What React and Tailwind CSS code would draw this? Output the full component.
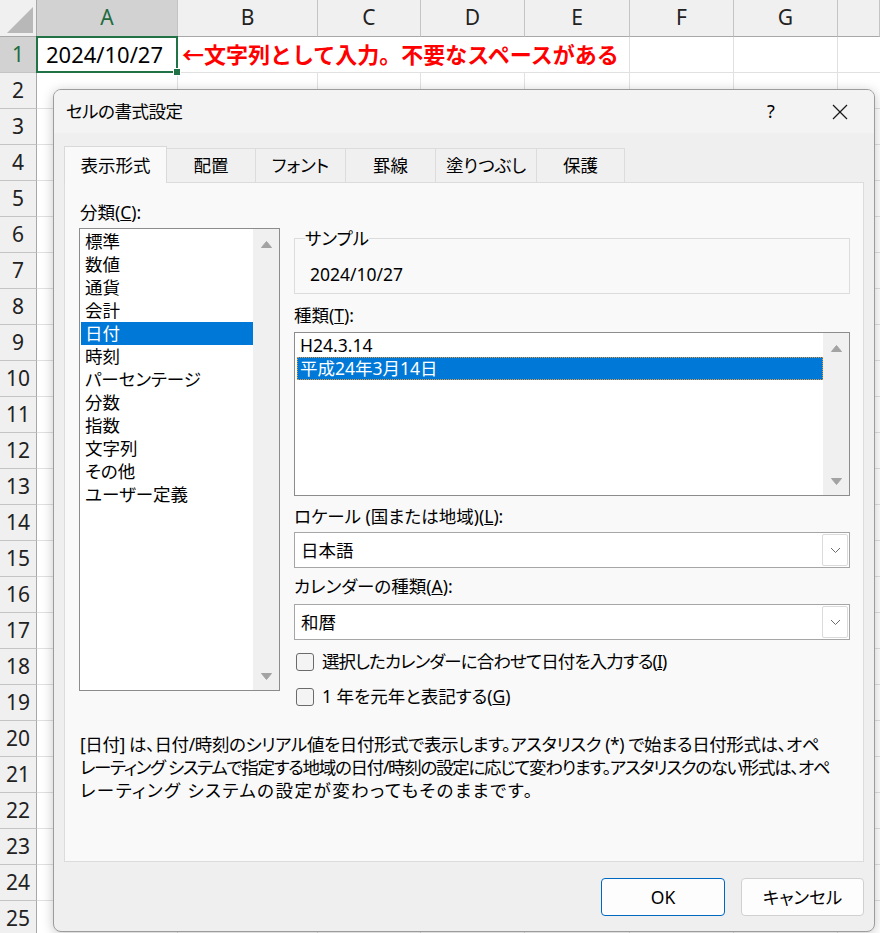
import React from "react";

function Tri({ up }) {
  return (
    <svg width="11" height="7" viewBox="0 0 11 7">
      <polygon
        points={up ? "0.5,6.5 5.5,0.5 10.5,6.5" : "0.5,0.5 5.5,6.5 10.5,0.5"}
        fill="#a3a3a3"
        stroke="#a3a3a3"
        strokeLinejoin="round"
      />
    </svg>
  );
}

function Chevron() {
  return (
    <svg width="11" height="7" viewBox="0 0 11 7">
      <polyline points="1,1 5.5,5.5 10,1" fill="none" stroke="#6b6b6b" strokeWidth="1" />
    </svg>
  );
}

function Sheet() {
  const letters = ["A", "B", "C", "D", "E", "F", "G", ""];
  const rows = Array.from({ length: 25 }, (_, i) => i + 1);
  return (
    <div className="grid grid-cols-[37px_141px_140px_103px_104px_105px_104px_104px_1fr] grid-rows-[37px_repeat(25,36px)]">
      <div className="relative bg-[#f0f0f0] border-r border-b border-[#a8a8a8]">
        <svg className="absolute left-0 top-0" width="36" height="36" viewBox="0 0 36 36">
          <polygon points="7,33 33,33 33,7" fill="#b8b8b8" />
        </svg>
      </div>
      {letters.map((l, i) => (
        <div
          key={i}
          className={
            i === 0
              ? "flex items-center justify-center text-[21px] bg-[#d2d2d2] text-[#1e6c40] border-b border-b-[#a8a8a8] border-r border-r-[#c4c4c4]"
              : "flex items-center justify-center text-[21px] bg-[#f0f0f0] text-[#222] border-b border-b-[#a8a8a8] border-r border-r-[#c4c4c4]"
          }
        >
          {l}
        </div>
      ))}
      {rows.map((r) => (
        <React.Fragment key={r}>
          <div
            className={
              r === 1
                ? "flex items-center justify-center text-[21px] bg-[#d2d2d2] text-[#1e6c40] border-r border-r-[#a8a8a8] border-b border-b-[#c4c4c4]"
                : "flex items-center justify-center text-[21px] bg-[#f0f0f0] text-[#222] border-r border-r-[#a8a8a8] border-b border-b-[#c4c4c4]"
            }
          >
            {r}
          </div>
          {r === 1 ? (
            <>
              <div className="relative border-r border-b border-[#e1e1e1] flex items-center pl-[9px] text-[22px] text-black">
                <div className="absolute -left-px -top-px -right-px -bottom-px border-2 border-[#217346]" />
                <div className="absolute -right-[4px] -bottom-[4px] w-[8px] h-[8px] bg-[#217346] border border-white" />
                2024/10/27
              </div>
              <div className="col-span-4 border-r border-b border-[#e1e1e1] flex items-center pl-[4px] text-[22px] font-bold text-[#ff0000] whitespace-nowrap">
                ←文字列として入力。不要なスペースがある
              </div>
              <div className="border-r border-b border-[#e1e1e1]" />
              <div className="border-r border-b border-[#e1e1e1]" />
              <div className="border-b border-[#e1e1e1]" />
            </>
          ) : (
            <>
              <div className="border-r border-b border-[#e1e1e1]" />
              <div className="border-r border-b border-[#e1e1e1]" />
              <div className="border-r border-b border-[#e1e1e1]" />
              <div className="border-r border-b border-[#e1e1e1]" />
              <div className="border-r border-b border-[#e1e1e1]" />
              <div className="border-r border-b border-[#e1e1e1]" />
              <div className="border-r border-b border-[#e1e1e1]" />
              <div className="border-b border-[#e1e1e1]" />
            </>
          )}
        </React.Fragment>
      ))}
    </div>
  );
}

function Label({ children, className = "" }) {
  return <div className={"h-[23px] leading-[23px] whitespace-nowrap " + className}>{children}</div>;
}

function Combo({ value, className = "" }) {
  return (
    <div className={"h-[36px] border border-[#a6a6a6] bg-white flex items-center pl-[6px] " + className}>
      <span className="flex-1 leading-[23px]">{value}</span>
      <div className="w-[26px] h-[32px] mr-[1px] border border-[#dadada] rounded-[2px] flex items-center justify-center">
        <Chevron />
      </div>
    </div>
  );
}

function Check({ children, className = "", textClass = "" }) {
  return (
    <div className={"h-[23px] flex items-center gap-[8px] pl-[2px] " + className}>
      <div className="w-[18px] h-[18px] rounded-[3px] border border-[#6b6b6b] bg-[#f4f4f4]" />
      <span className={"leading-[23px] whitespace-nowrap " + textClass}>{children}</span>
    </div>
  );
}

function Dialog() {
  const cats = ["標準", "数値", "通貨", "会計", "日付", "時刻", "パーセンテージ", "分数", "指数", "文字列", "その他", "ユーザー定義"];
  const tabs = [
    ["表示形式", "w-[103px]"],
    ["配置", "w-[90px]"],
    ["フォント", "w-[91px]"],
    ["罫線", "w-[91px]"],
    ["塗りつぶし", "w-[102px]"],
    ["保護", "w-[89px]"],
  ];
  return (
    <div className="absolute left-[53px] top-[89px] w-[822px] h-[843px] rounded-[8px] border border-[#9c9c9c] bg-[#efefef] shadow-[0_2px_12px_rgba(0,0,0,0.22)] flex flex-col overflow-hidden text-[17.5px] text-black [font-feature-settings:'palt']">
      <div className="h-[43px] shrink-0 bg-[#f3f3f3] flex items-center pl-[12px]">
        <span className="leading-[23px] tracking-[-0.5px]">セルの書式設定</span>
        <div className="ml-auto flex items-center pr-[11px] gap-[23px]">
          <div className="w-[46px] text-center text-[18px] leading-[23px]">?</div>
          <div className="w-[46px] h-[23px] flex items-center justify-center">
            <svg width="16" height="16" viewBox="0 0 16 16">
              <line x1="1" y1="1" x2="15" y2="15" stroke="#1a1a1a" strokeWidth="1.3" />
              <line x1="15" y1="1" x2="1" y2="15" stroke="#1a1a1a" strokeWidth="1.3" />
            </svg>
          </div>
        </div>
      </div>
      <div className="flex-1 px-[10px]">
        <div className="mt-[12px] flex items-end h-[37px]">
          {tabs.map(([t, w], i) => (
            <div
              key={t}
              className={
                i === 0
                  ? w + " relative z-10 h-[37px] -mb-px bg-[#f9f9f9] border border-b-0 border-[#d9d9d9] flex items-center justify-center leading-[23px]"
                  : w + " h-[34px] -ml-px bg-[#f0f0f0] border border-b-0 border-[#dcdcdc] flex items-center justify-center leading-[23px]"
              }
            >
              {t}
            </div>
          ))}
        </div>
        <div className="w-[800px] h-[680px] border border-[#dcdcdc] bg-[#f9f9f9] pl-[14px] pt-[18px]">
          <div className="flex items-start">
            <div className="w-[201px]">
              <Label className="pl-[1px]">
                分類(<span className="underline">C</span>):
              </Label>
              <div className="mt-[4px] h-[463px] border border-[#8c8c8c] bg-white flex">
                <div className="flex-1 pt-[1px] pl-[1px]">
                  {cats.map((c) => (
                    <div
                      key={c}
                      className={
                        c === "日付"
                          ? "h-[23px] leading-[23px] pl-[4px] bg-[#0078d7] text-white whitespace-nowrap"
                          : "h-[23px] leading-[23px] pl-[4px] whitespace-nowrap"
                      }
                    >
                      {c}
                    </div>
                  ))}
                </div>
                <div className="w-[26px] bg-[#f0f0f0] flex flex-col items-center justify-between pt-[12px] pb-[10px]">
                  <Tri up />
                  <Tri />
                </div>
              </div>
            </div>
            <div className="ml-[14px] w-[556px] pt-[29px]">
              <fieldset className="border border-[#dcdcdc]">
                <legend className="ml-[10px] leading-[17px]">サンプル</legend>
                <div className="pl-[15px] pt-[16px] pb-[7px] leading-[23px]">2024/10/27</div>
              </fieldset>
              <Label className="mt-[10px]">
                種類(<span className="underline">T</span>):
              </Label>
              <div className="mt-[5px] h-[164px] border border-[#8c8c8c] bg-white flex">
                <div className="flex-1 pt-[1px] pl-[2px]">
                  <div className="h-[23px] leading-[23px] pl-[3px]">H24.3.14</div>
                  <div className="h-[23px] leading-[23px] pl-[3px] bg-[#0078d7] text-white outline outline-1 outline-dotted outline-[#e39a3c] -outline-offset-1">
                    平成24年3月14日
                  </div>
                </div>
                <div className="w-[26px] bg-[#f0f0f0] flex flex-col items-center justify-between pt-[12px] pb-[10px]">
                  <Tri up />
                  <Tri />
                </div>
              </div>
              <Label className="mt-[9px]">
                ロケール (国または地域)(<span className="underline">L</span>):
              </Label>
              <Combo className="mt-[4px]" value="日本語" />
              <Label className="mt-[7px]">
                カレンダーの種類(<span className="underline">A</span>):
              </Label>
              <Combo className="mt-[6px]" value="和暦" />
              <Check className="mt-[10px]" textClass="tracking-[-0.9px]">
                選択したカレンダーに合わせて日付を入力する(<span className="underline">I</span>)
              </Check>
              <Check className="mt-[12px]">
                1 年を元年と表記する(<span className="underline">G</span>)
              </Check>
            </div>
          </div>
          <div className="mt-[25px] pl-[1px] leading-[23px] whitespace-nowrap">
            <div className="tracking-[-0.4px]">[日付] は、日付/時刻のシリアル値を日付形式で表示します。アスタリスク (*) で始まる日付形式は、オペ</div>
            <div className="tracking-[-1.3px]">レーティング システムで指定する地域の日付/時刻の設定に応じて変わります。アスタリスクのない形式は、オペ</div>
            <div className="tracking-[1.5px]">レーティング システムの設定が変わってもそのままです。</div>
          </div>
        </div>
        <div className="mt-[16px] flex justify-end gap-[16px]">
          <div className="w-[124px] h-[38px] rounded-[4px] border-[1.5px] border-[#0067c0] bg-[#fdfdfd] flex items-center justify-center leading-[23px]">
            OK
          </div>
          <div className="w-[123px] h-[38px] rounded-[4px] border border-[#d0d0d0] bg-[#fdfdfd] flex items-center justify-center leading-[23px]">
            キャンセル
          </div>
        </div>
      </div>
    </div>
  );
}

export default function App() {
  return (
    <div className="relative w-[880px] h-[933px] overflow-hidden bg-white font-['Noto_Sans','Noto_Sans_CJK_JP',sans-serif]">
      <Sheet />
      <Dialog />
    </div>
  );
}
